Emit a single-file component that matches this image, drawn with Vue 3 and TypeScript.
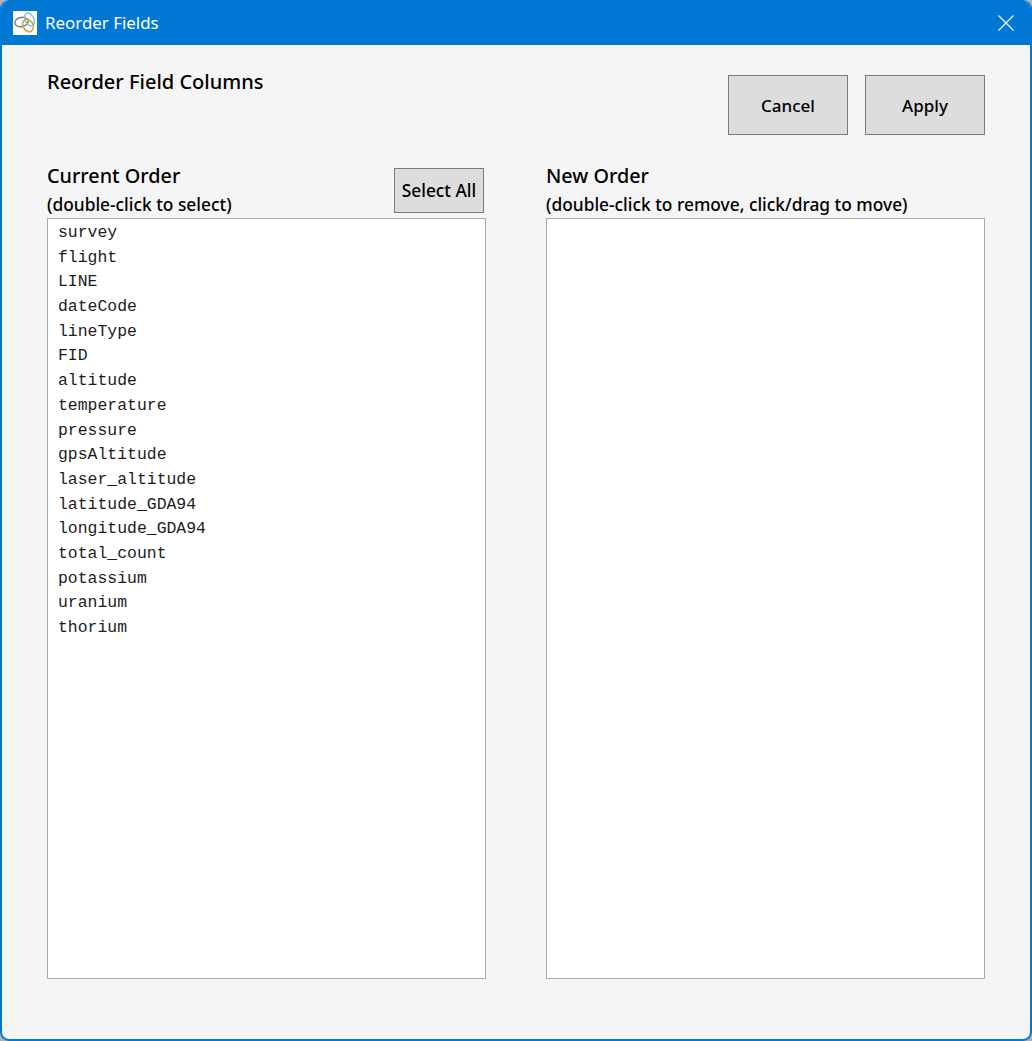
<script setup lang="ts">
const currentFields: string[] = [
  'survey', 'flight', 'LINE', 'dateCode', 'lineType', 'FID', 'altitude', 'temperature',
  'pressure', 'gpsAltitude', 'laser_altitude', 'latitude_GDA94', 'longitude_GDA94',
  'total_count', 'potassium', 'uranium', 'thorium'
];
const newFields: string[] = [];
</script>
<template>
  <div class="window">
    <div class="titlebar">
      <div class="app-icon">
        <svg width="24" height="24" viewBox="0 0 24 24" fill="none">
          <ellipse cx="8.5" cy="11" rx="6.8" ry="4.6" stroke="#7d7d7d" stroke-width="1.4" transform="rotate(-12 8.5 11)" />
          <ellipse cx="16.5" cy="8.5" rx="4.4" ry="6.8" stroke="#7fc0dc" stroke-width="1.4" transform="rotate(-25 16.5 8.5)" />
          <ellipse cx="15" cy="14.5" rx="5" ry="6.6" stroke="#d0a640" stroke-width="1.6" transform="rotate(-30 15 14.5)" />
        </svg>
      </div>
      <span class="title-text">Reorder Fields</span>
      <svg class="close" width="16" height="16" viewBox="0 0 16 16">
        <path d="M0.5 0.5 L15.5 15.5 M15.5 0.5 L0.5 15.5" stroke="#fff" stroke-width="1.1" fill="none" />
      </svg>
    </div>
    <div class="content">
      <div class="top-row">
        <h1 class="heading">Reorder Field Columns</h1>
        <div class="actions">
          <button class="btn btn-large">Cancel</button>
          <button class="btn btn-large">Apply</button>
        </div>
      </div>
      <div class="columns">
        <div class="column">
          <div class="column-head">
            <div>
              <div class="column-title">Current Order</div>
              <div class="column-hint">(double-click to select)</div>
            </div>
            <button class="btn btn-small">Select All</button>
          </div>
          <ul class="list">
            <li v-for="field in currentFields" :key="field">{{ field }}</li>
          </ul>
        </div>
        <div class="column">
          <div class="column-head">
            <div>
              <div class="column-title">New Order</div>
              <div class="column-hint">(double-click to remove, click/drag to move)</div>
            </div>
          </div>
          <ul class="list">
            <li v-for="field in newFields" :key="field">{{ field }}</li>
          </ul>
        </div>
      </div>
    </div>
  </div>
</template>
<style>
html, body {
  margin: 0;
  background: #b0b0b0;
}
</style>
<style scoped>
.window {
  box-sizing: border-box;
  width: 1032px;
  height: 1041px;
  display: flex;
  flex-direction: column;
  border-radius: 9px;
  overflow: hidden;
  background: #f5f5f5;
  border: 2px solid #0078d4;
  border-top: none;
  font-family: "Noto Sans", "Open Sans", sans-serif;
  color: #000;
}
.titlebar {
  flex: none;
  height: 45px;
  margin: 0 -2px;
  padding-left: 13px;
  display: flex;
  align-items: center;
  background: #0078d4;
  color: #fff;
}
.app-icon {
  width: 24px;
  height: 24px;
  background: #fff;
  margin-right: 8px;
}
.app-icon svg {
  display: block;
}
.title-text {
  font-size: 16.9px;
}
.close {
  margin-left: auto;
  margin-right: 18px;
}
.content {
  flex: 1;
  padding: 30px 45px 0;
}
.top-row {
  display: flex;
  justify-content: space-between;
  align-items: flex-start;
}
.heading {
  margin: -7px 0 0;
  font-size: 20px;
  font-weight: 500;
  line-height: 28px;
}
.actions {
  display: flex;
  gap: 17px;
}
.btn {
  box-sizing: border-box;
  background: #dddddd;
  border: 1px solid #7a7a7a;
  font-family: inherit;
  font-weight: 500;
  color: #000;
  padding: 0;
}
.btn-large {
  width: 120px;
  height: 60px;
  font-size: 17px;
}
.btn-small {
  width: 90px;
  height: 45px;
  font-size: 17.3px;
  margin-right: 2px;
  margin-top: 3px;
}
.columns {
  display: grid;
  grid-template-columns: 439px 439px;
  gap: 60px;
  margin-top: 30px;
}
.column-head {
  height: 53px;
  display: flex;
  justify-content: space-between;
  align-items: flex-start;
}
.column-title {
  font-size: 19.8px;
  font-weight: 500;
  line-height: 28px;
  margin-top: -3px;
}
.column-hint {
  font-size: 17.35px;
  font-weight: 500;
  line-height: 24px;
  margin-top: 2px;
}
.list {
  box-sizing: border-box;
  height: 761px;
  margin: 0;
  padding: 2px 10px 0;
  list-style: none;
  background: #fff;
  border: 1px solid #a9a9a9;
  font-family: "Liberation Mono", monospace;
  font-size: 16.45px;
  line-height: 24.69px;
  color: #1c1c1c;
}
</style>
